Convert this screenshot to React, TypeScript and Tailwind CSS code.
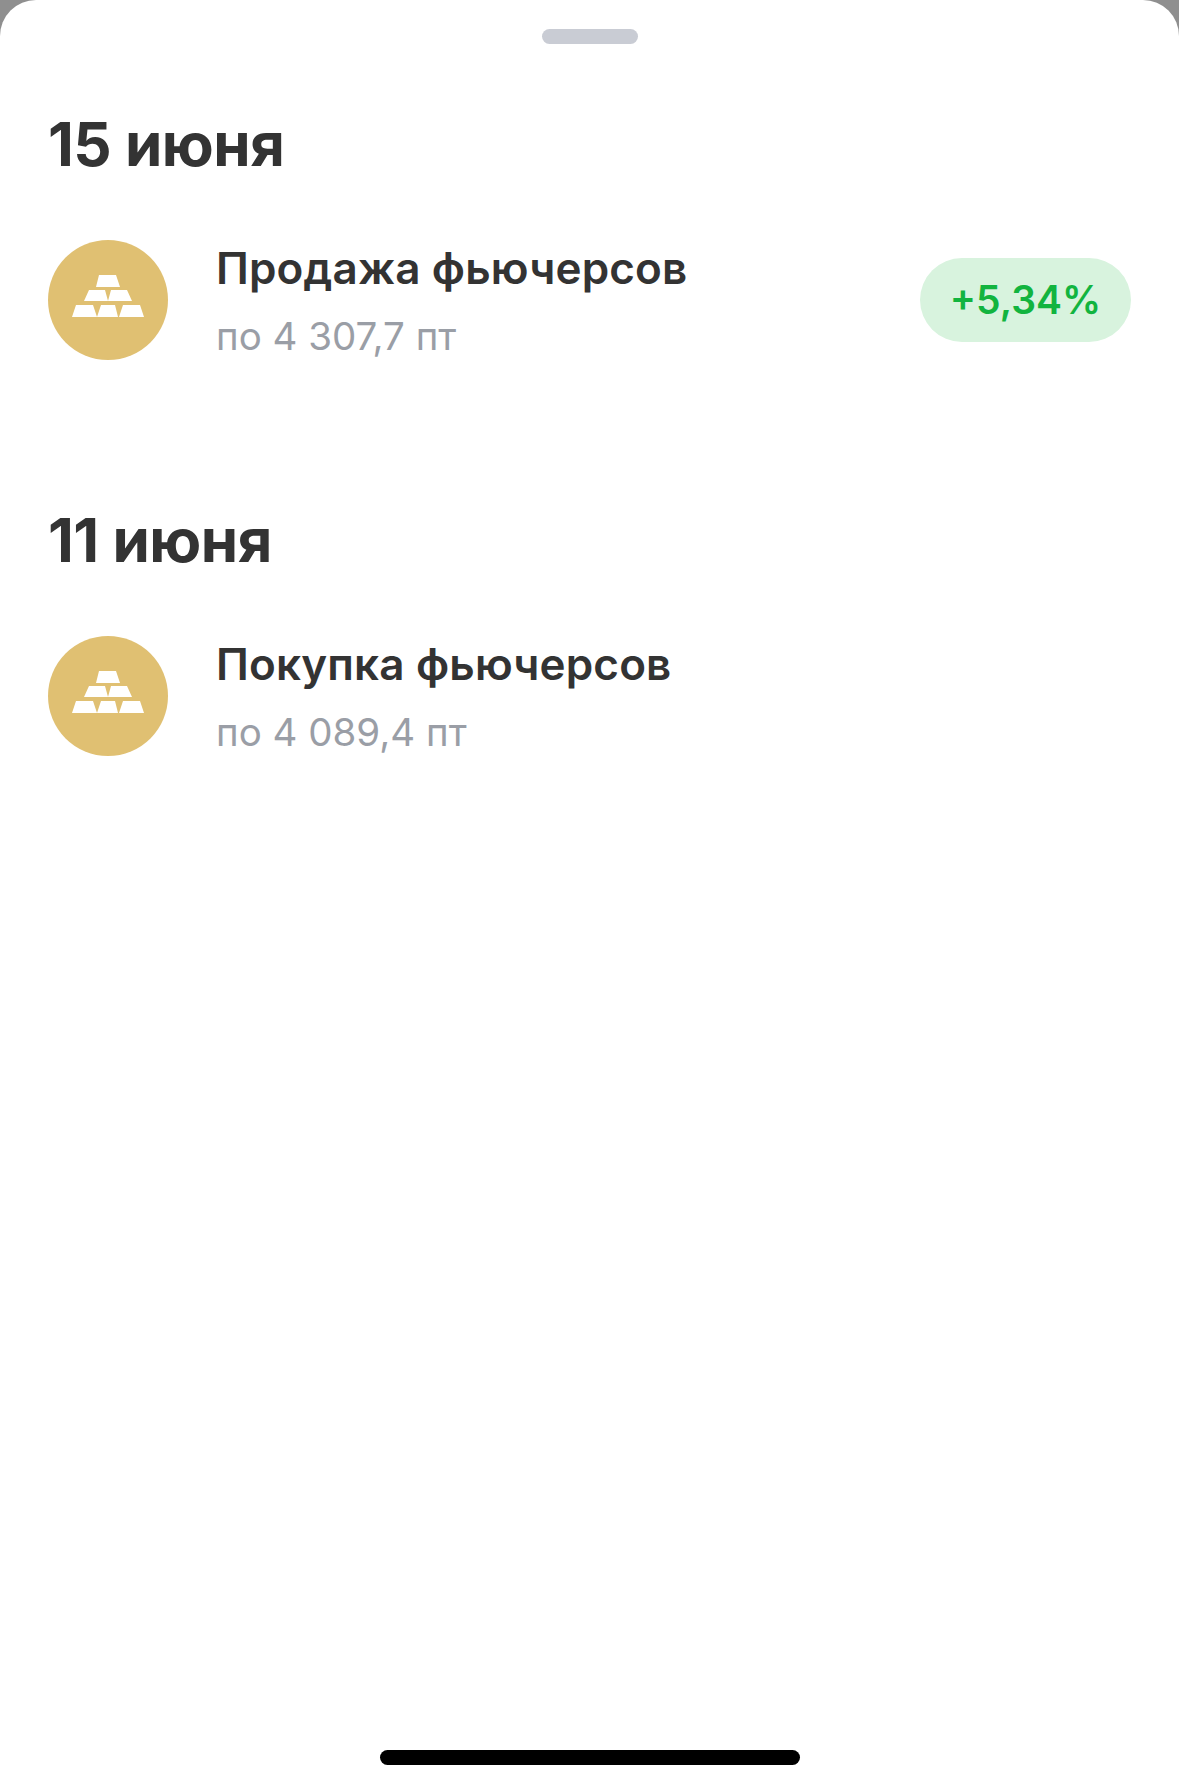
const font = "font-['Inter','Roboto',sans-serif]";

function GoldIcon() {
  return (
    <div className="flex h-[120px] w-[120px] shrink-0 items-center justify-center rounded-full bg-[#e0c072]">
      <svg className="mb-[8px]" width="72" height="42" viewBox="0 0 72 42" fill="#fff">
        <path d="M27 0h17l4 12H24z" />
        <path d="M17 15h16l3 11H12z" />
        <path d="M39 15h16l5 11H36z" />
        <path d="M4 30h17l4 12H0z" />
        <path d="M29 30h14l3 12H25z" />
        <path d="M51 30h17l4 12H47z" />
      </svg>
    </div>
  );
}

type Deal = { date: string; title: string; price: string; profit?: string };

const deals: Deal[] = [
  { date: "15 июня", title: "Продажа фьючерсов", price: "по 4 307,7 пт", profit: "+5,34%" },
  { date: "11 июня", title: "Покупка фьючерсов", price: "по 4 089,4 пт" },
];

export default function App() {
  return (
    <div className={`${font} flex h-[1789px] w-[1179px] flex-col bg-[#8f8f8f]`}>
      <div className="flex flex-1 flex-col rounded-t-[36px] bg-white">
        <div className="mx-auto mt-[29px] h-[15px] w-[96px] rounded-full bg-[#c9ccd4]" />
        <div className="mt-[65px] flex flex-1 flex-col gap-[145px] px-[48px]">
          {deals.map((d) => (
            <section key={d.date}>
              <h2 className="text-[60px] leading-[70px] font-bold tracking-[-0.5px] text-[#333333]">{d.date}</h2>
              <div className="mt-[61px] flex items-center">
                <GoldIcon />
                <div className="ml-[48px] flex-1">
                  <div className="text-[44px] leading-[52px] font-semibold tracking-[0.15px] text-[#333333]">{d.title}</div>
                  <div className="mt-[20px] text-[38.5px] leading-[44px] text-[#9a9ea6]">{d.price}</div>
                </div>
                {d.profit && (
                  <div className="flex h-[84px] w-[211px] items-center justify-center rounded-full bg-[#d8f3de] text-[39px] font-semibold text-[#12b43f]">
                    {d.profit}
                  </div>
                )}
              </div>
            </section>
          ))}
        </div>
        <div className="mx-auto mb-[24px] h-[15px] w-[420px] rounded-full bg-black" />
      </div>
    </div>
  );
}
